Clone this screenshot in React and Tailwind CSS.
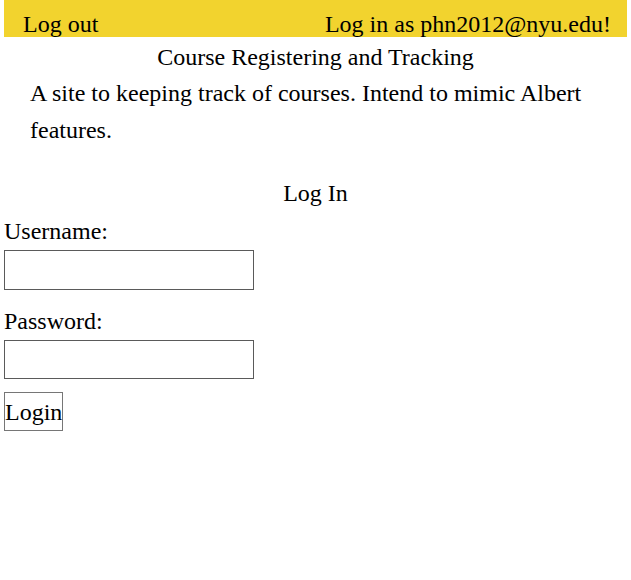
export default function App() {
  return (
    <div className="px-1 text-[24px] leading-[1.15] text-black font-[Liberation_Serif,serif]">
      <div className="flex justify-between items-end h-[37px] bg-[#f2d32e] pl-[19px] pr-[16px] leading-[25px]">
        <a href="#">Log out</a>
        <a href="#">Log in as phn2012@nyu.edu!</a>
      </div>
      <h1 className="text-center mt-[7px]">Course Registering and Tracking</h1>
      <p className="px-[26px] leading-[37px] mt-[3px]">
        A site to keeping track of courses. Intend to mimic Albert features.
      </p>
      <h2 className="text-center mt-[31px]">Log In</h2>
      <form className="flex flex-col mt-[11px]">
        <label>Username:</label>
        <input type="text" className="w-[250px] h-[40px] border border-[#5a5a5a] mt-[4px]" />
        <label className="mt-[18px]">Password:</label>
        <input type="password" className="w-[250px] h-[39px] border border-[#5a5a5a] mt-[5px]" />
        <div className="mt-[13px]">
          <button type="submit" className="border border-[#767676] h-[39px] px-0 leading-none">Login</button>
        </div>
      </form>
    </div>
  );
}
